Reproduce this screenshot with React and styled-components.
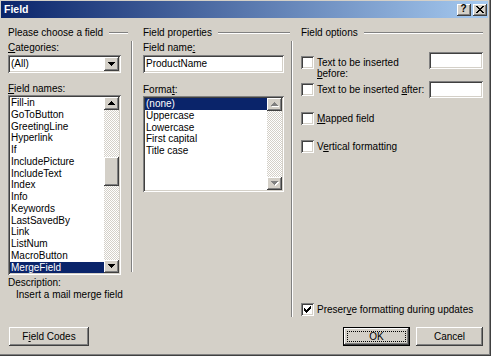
import React from 'react';
import styled, { createGlobalStyle, css } from 'styled-components';

const FACE = '#D4D0C8';
const SHADOW = '#808080';
const DARK = '#404040';
const HILITE = '#0A246A';

const GlobalStyle = createGlobalStyle`
  html, body { margin: 0; padding: 0; background: ${FACE}; }
  body {
    font-family: "Liberation Sans", Arial, sans-serif;
    font-size: 10px;
    color: #000;
  }
  * { box-sizing: border-box; }
`;

const raised = css`
  box-shadow: inset -1px -1px ${DARK}, inset 1px 1px #fff,
    inset -2px -2px ${SHADOW}, inset 2px 2px ${FACE};
`;
const sunken = css`
  box-shadow: inset 1px 1px ${SHADOW}, inset -1px -1px #fff,
    inset 2px 2px ${DARK}, inset -2px -2px ${FACE};
`;

const Window = styled.div`
  width: 491px;
  height: 356px;
  background: ${FACE};
  padding: 1px 3px 3px 1px;
  box-shadow: inset -1px -1px ${DARK}, inset -2px -2px ${SHADOW};
  display: flex;
  flex-direction: column;
`;

const TitleBar = styled.div`
  height: 17px;
  display: flex;
  align-items: center;
  padding: 0 1px 0 3px;
  background: linear-gradient(to right, ${HILITE}, #a6caf0);
`;

const TitleText = styled.div`
  flex: 1;
  color: #fff;
  font-weight: bold;
  font-size: 10.5px;
  line-height: 17px;
`;

const CaptionButtons = styled.div`
  display: flex;
  gap: 2px;
`;

const CaptionButton = styled.div`
  width: 14px;
  height: 12px;
  background: ${FACE};
  box-shadow: inset -1px -1px ${DARK}, inset 1px 1px #fff, inset -2px -2px ${SHADOW};
  display: flex;
  align-items: center;
  justify-content: center;
  font-weight: bold;
  font-size: 10px;
  line-height: 10px;
  padding: 0 1px 1px 0;
`;

const Body = styled.div`
  flex: 1;
  display: flex;
  flex-direction: column;
  padding: 9px 3px 0 7px;
`;

const Columns = styled.div`
  display: grid;
  grid-template-columns: 123px 2px 158px 2px 1fr;
  height: 290px;
`;

const Column = styled.div`
  display: flex;
  flex-direction: column;
  padding-left: ${(p) => p.$pl || 0}px;
  padding-right: ${(p) => p.$pr || 0}px;
`;

const GroupHeader = styled.div`
  display: flex;
  align-items: center;
  height: 12px;
  line-height: 12px;
  white-space: nowrap;
  margin-right: ${(p) => p.$mr || 0}px;
`;

const EtchedLine = styled.div`
  flex: 1;
  height: 2px;
  margin-left: 6px;
  border-top: 1px solid ${SHADOW};
  border-bottom: 1px solid #fff;
`;

const VSep = styled.div`
  width: 2px;
  align-self: start;
  margin-top: 14px;
  height: ${(p) => p.$h}px;
  border-left: 1px solid ${SHADOW};
  border-right: 1px solid #fff;
`;

const Label = styled.div`
  height: 12px;
  line-height: 12px;
  white-space: nowrap;
  margin-top: ${(p) => p.$mt || 0}px;
  padding-left: ${(p) => p.$pl || 0}px;
`;

const U = styled.span`
  text-decoration: underline;
  text-underline-offset: 1px;
`;

const Combo = styled.div`
  width: 113px;
  height: 18px;
  margin-top: 1px;
  padding: 2px;
  background: #fff;
  display: flex;
  ${sunken};
`;

const ComboValue = styled.div`
  flex: 1;
  padding-left: 1px;
  line-height: 14px;
`;

const SmallButton = styled.div`
  width: 15px;
  height: ${(p) => p.$h || 13}px;
  flex-shrink: 0;
  background: ${FACE};
  display: flex;
  align-items: center;
  justify-content: center;
  ${raised};
`;

const ListBox = styled.div`
  width: ${(p) => p.$w}px;
  height: ${(p) => p.$h}px;
  padding: 2px;
  background: #fff;
  display: flex;
  ${sunken};
`;

const Items = styled.div`
  flex: 1;
  overflow: hidden;
`;

const Item = styled.div`
  height: 11.75px;
  line-height: 11.75px;
  padding-left: 1px;
  white-space: nowrap;
  background: ${(p) => (p.$selected ? HILITE : 'transparent')};
  color: ${(p) => (p.$selected ? '#fff' : '#000')};
`;

const ScrollBar = styled.div`
  width: 15px;
  display: flex;
  flex-direction: column;
`;

const Track = styled.div`
  flex: 1;
  background: repeating-conic-gradient(#fff 0 25%, ${FACE} 0 50%) 0 0 / 2px 2px;
  overflow: hidden;
`;

const Thumb = styled.div`
  margin-top: ${(p) => p.$top}px;
  height: ${(p) => p.$h}px;
  background: ${FACE};
  ${raised};
`;

const TextInput = styled.div`
  width: ${(p) => p.$w}px;
  height: ${(p) => p.$h}px;
  margin-top: ${(p) => p.$mt || 0}px;
  flex-shrink: 0;
  padding: 2px 3px;
  background: #fff;
  line-height: ${(p) => p.$h - 4}px;
  ${sunken};
`;

const CheckRow = styled.div`
  display: flex;
  align-items: ${(p) => p.$align || 'center'};
  height: ${(p) => p.$h || 13}px;
  margin-top: ${(p) => p.$mt || 0}px;
  margin-bottom: ${(p) => p.$mb || 0}px;
  ${(p) => p.$auto && 'margin-top: auto;'}
`;

const CheckBox = styled.div`
  width: 13px;
  height: 13px;
  flex-shrink: 0;
  margin-top: ${(p) => p.$mt || 0}px;
  background: #fff;
  display: flex;
  align-items: center;
  justify-content: center;
  ${sunken};
`;

const OptionText = styled.div`
  flex: 1;
  margin-left: 3px;
  margin-top: ${(p) => p.$mt || 0}px;
  line-height: 11px;
  white-space: nowrap;
`;

const ButtonRow = styled.div`
  display: flex;
  margin-top: 10px;
  padding: 0 2px 0 1px;
  gap: 6px;
`;

const Spacer = styled.div`
  flex: 1;
`;

const PushButton = styled.div`
  width: ${(p) => p.$w}px;
  height: 19px;
  background: ${FACE};
  display: flex;
  align-items: center;
  justify-content: center;
  line-height: 12px;
  ${raised};
  ${(p) =>
    p.$default &&
    css`
      border: 1px solid #000;
      outline: 1px dotted #000;
      outline-offset: -5px;
    `}
`;

const Arrow = ({ dir = 'down', disabled }) => {
  const d =
    dir === 'up'
      ? 'M3 0h1v1h-1z M2 1h3v1h-3z M1 2h5v1h-5z M0 3h7v1h-7z'
      : 'M0 0h7v1h-7z M1 1h5v1h-5z M2 2h3v1h-3z M3 3h1v1h-1z';
  return (
    <svg width="8" height="5" viewBox="0 0 8 5" shapeRendering="crispEdges">
      {disabled && <path d={d} fill="#fff" transform="translate(1 1)" />}
      <path d={d} fill={disabled ? SHADOW : '#000'} />
    </svg>
  );
};

const CloseGlyph = () => (
  <svg width="8" height="7" viewBox="0 0 8 7" shapeRendering="crispEdges">
    <path
      d="M0 0h2v1h-2z M6 0h2v1h-2z M1 1h2v1h-2z M5 1h2v1h-2z M2 2h4v1h-4z M3 3h2v1h-2z M2 4h4v1h-4z M1 5h2v1h-2z M5 5h2v1h-2z M0 6h2v1h-2z M6 6h2v1h-2z"
      fill="#000"
    />
  </svg>
);

const CheckGlyph = () => (
  <svg width="7" height="7" viewBox="0 0 7 7" shapeRendering="crispEdges">
    <path
      d="M6 0h1v3h-1z M5 1h1v3h-1z M4 2h1v3h-1z M3 3h1v3h-1z M2 4h1v3h-1z M1 3h1v3h-1z M0 2h1v3h-1z"
      fill="#000"
    />
  </svg>
);

const fieldNames = [
  'Fill-in',
  'GoToButton',
  'GreetingLine',
  'Hyperlink',
  'If',
  'IncludePicture',
  'IncludeText',
  'Index',
  'Info',
  'Keywords',
  'LastSavedBy',
  'Link',
  'ListNum',
  'MacroButton',
  'MergeField',
];

const formats = ['(none)', 'Uppercase', 'Lowercase', 'First capital', 'Title case'];

export default function App() {
  return (
    <>
      <GlobalStyle />
      <Window>
        <TitleBar>
          <TitleText>Field</TitleText>
          <CaptionButtons>
            <CaptionButton>?</CaptionButton>
            <CaptionButton>
              <CloseGlyph />
            </CaptionButton>
          </CaptionButtons>
        </TitleBar>
        <Body>
          <Columns>
            <Column>
              <GroupHeader $mr={3}>
                Please choose a field
                <EtchedLine />
              </GroupHeader>
              <Label $mt={3}>
                <U>C</U>ategories:
              </Label>
              <Combo>
                <ComboValue>(All)</ComboValue>
                <SmallButton $h={14}>
                  <Arrow dir="down" />
                </SmallButton>
              </Combo>
              <Label $mt={10}>
                <U>F</U>ield names:
              </Label>
              <ListBox $w={113} $h={180}>
                <Items>
                  {fieldNames.map((n) => (
                    <Item key={n} $selected={n === 'MergeField'}>
                      {n}
                    </Item>
                  ))}
                </Items>
                <ScrollBar>
                  <SmallButton>
                    <Arrow dir="up" />
                  </SmallButton>
                  <Track>
                    <Thumb $top={47} $h={29} />
                  </Track>
                  <SmallButton>
                    <Arrow dir="down" />
                  </SmallButton>
                </ScrollBar>
              </ListBox>
              <Label $mt={2}>Description:</Label>
              <Label $pl={8}>Insert a mail merge field</Label>
            </Column>
            <VSep $h={231} />
            <Column $pl={10} $pr={1}>
              <GroupHeader>
                Field properties
                <EtchedLine />
              </GroupHeader>
              <Label $mt={3}>
                Field name<U>:</U>
              </Label>
              <TextInput $w={141} $h={18} $mt={1}>
                ProductName
              </TextInput>
              <Label $mt={11}>
                Forma<U>t</U>:
              </Label>
              <ListBox $w={141} $h={96}>
                <Items>
                  {formats.map((f) => (
                    <Item key={f} $selected={f === '(none)'}>
                      {f}
                    </Item>
                  ))}
                </Items>
                <ScrollBar>
                  <SmallButton>
                    <Arrow dir="up" disabled />
                  </SmallButton>
                  <Track />
                  <SmallButton>
                    <Arrow dir="down" disabled />
                  </SmallButton>
                </ScrollBar>
              </ListBox>
            </Column>
            <VSep $h={276} />
            <Column $pl={8} $pr={2}>
              <GroupHeader>
                Field options
                <EtchedLine />
              </GroupHeader>
              <CheckRow $align="flex-start" $h={29} $mt={13}>
                <CheckBox $mt={4} />
                <OptionText $mt={5}>
                  Text to be inserted
                  <br />
                  <U>b</U>efore:
                </OptionText>
                <TextInput $w={54} $h={17} />
              </CheckRow>
              <CheckRow $h={17}>
                <CheckBox />
                <OptionText>
                  Text to be inserted <U>a</U>fter:
                </OptionText>
                <TextInput $w={54} $h={17} />
              </CheckRow>
              <CheckRow $mt={14}>
                <CheckBox />
                <OptionText>
                  <U>M</U>apped field
                </OptionText>
              </CheckRow>
              <CheckRow $mt={15}>
                <CheckBox />
                <OptionText>
                  V<U>e</U>rtical formatting
                </OptionText>
              </CheckRow>
              <CheckRow $auto $mb={1}>
                <CheckBox>
                  <CheckGlyph />
                </CheckBox>
                <OptionText>
                  Preser<U>v</U>e formatting during updates
                </OptionText>
              </CheckRow>
            </Column>
          </Columns>
          <ButtonRow>
            <PushButton $w={80}>
              F<U>i</U>eld Codes
            </PushButton>
            <Spacer />
            <PushButton $w={67} $default>
              OK
            </PushButton>
            <PushButton $w={67}>Cancel</PushButton>
          </ButtonRow>
        </Body>
      </Window>
    </>
  );
}
